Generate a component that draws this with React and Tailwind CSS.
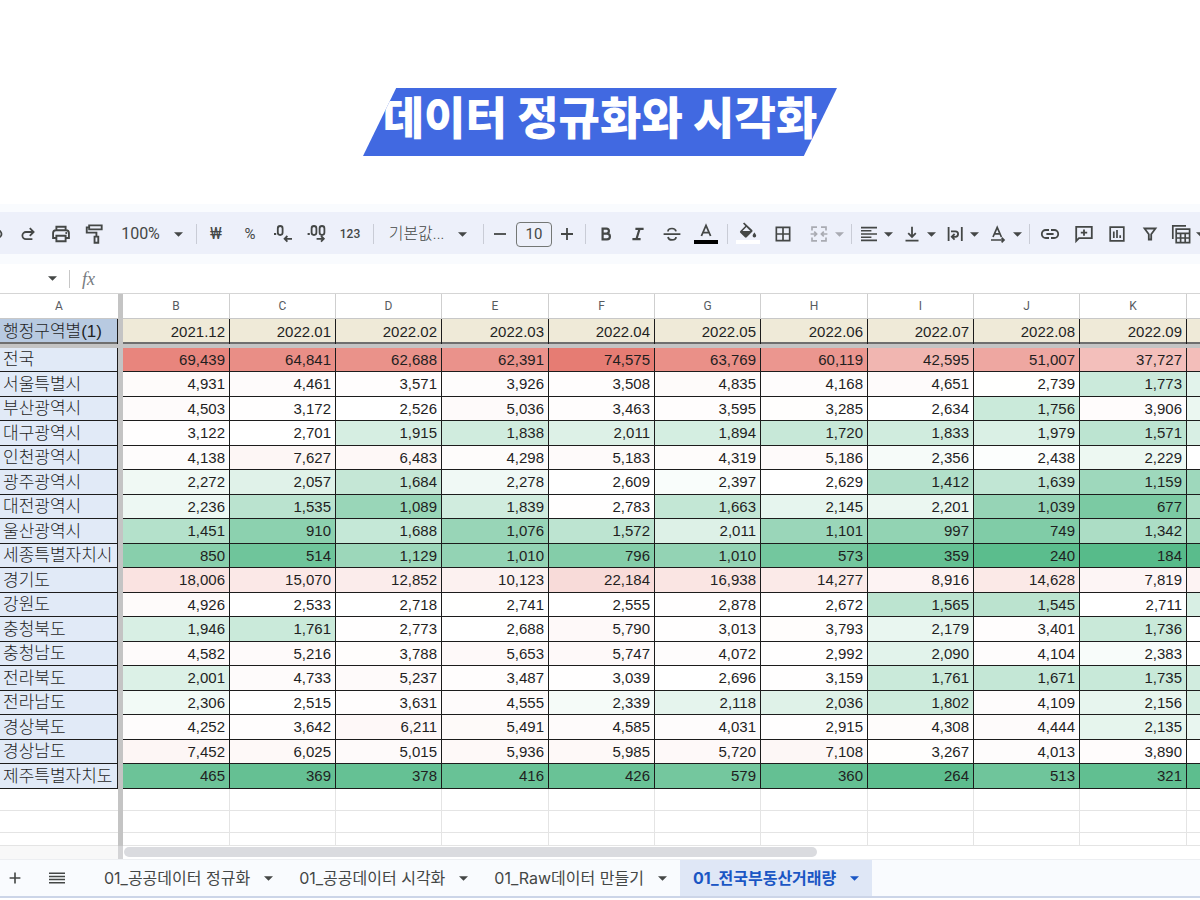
import { MdBorderAll } from "react-icons/md";

const COLS = ["B", "C", "D", "E", "F", "G", "H", "I", "J", "K"];
const MONTHS = ["2021.12", "2022.01", "2022.02", "2022.03", "2022.04", "2022.05", "2022.06", "2022.07", "2022.08", "2022.09"];

// The last value of each row only tints the trailing column.
const ROWS = [
  ["전국", 69439, 64841, 62688, 62391, 74575, 63769, 60119, 42595, 51007, 37727, 38000],
  ["서울특별시", 4931, 4461, 3571, 3926, 3508, 4835, 4168, 4651, 2739, 1773, 2080],
  ["부산광역시", 4503, 3172, 2526, 5036, 3463, 3595, 3285, 2634, 1756, 3906, 2200],
  ["대구광역시", 3122, 2701, 1915, 1838, 2011, 1894, 1720, 1833, 1979, 1571, 1950],
  ["인천광역시", 4138, 7627, 6483, 4298, 5183, 4319, 5186, 2356, 2438, 2229, 2500],
  ["광주광역시", 2272, 2057, 1684, 2278, 2609, 2397, 2629, 1412, 1639, 1159, 1160],
  ["대전광역시", 2236, 1535, 1089, 1839, 2783, 1663, 2145, 2201, 1039, 677, 1350],
  ["울산광역시", 1451, 910, 1688, 1076, 1572, 2011, 1101, 997, 749, 1342, 1250],
  ["세종특별자치시", 850, 514, 1129, 1010, 796, 1010, 573, 359, 240, 184, 220],
  ["경기도", 18006, 15070, 12852, 10123, 22184, 16938, 14277, 8916, 14628, 7819, 8900],
  ["강원도", 4926, 2533, 2718, 2741, 2555, 2878, 2672, 1565, 1545, 2711, 1950],
  ["충청북도", 1946, 1761, 2773, 2688, 5790, 3013, 3793, 2179, 3401, 1736, 2500],
  ["충청남도", 4582, 5216, 3788, 5653, 5747, 4072, 2992, 2090, 4104, 2383, 2500],
  ["전라북도", 2001, 4733, 5237, 3487, 3039, 2696, 3159, 1761, 1671, 1735, 1850],
  ["전라남도", 2306, 2515, 3631, 4555, 2339, 2118, 2036, 1802, 4109, 2156, 1900],
  ["경상북도", 4252, 3642, 6211, 5491, 4585, 4031, 2915, 4308, 4444, 2135, 2180],
  ["경상남도", 7452, 6025, 5015, 5936, 5985, 5720, 7108, 3267, 4013, 3890, 2500],
  ["제주특별자치도", 465, 369, 378, 416, 426, 579, 360, 264, 513, 321, 270],
];

const MIN = 184;
const MID = 2480;
const MAX = 74575;
const GREEN = [87, 187, 138];
const WHITE = [255, 255, 255];
const RED = [230, 124, 115];

// Three-point colour scale: green (low), white (median), red (high).
function heat(v) {
  const low = v < MID;
  const t = low ? (v - MIN) / (MID - MIN) : (v - MID) / (MAX - MID);
  const from = low ? GREEN : WHITE;
  const to = low ? WHITE : RED;
  const c = from.map((a, i) => Math.round(a + (to[i] - a) * t));
  return `rgb(${c.join(",")})`;
}

function Tool({ label, className = "", children }) {
  return (
    <button type="button" aria-label={label} className={`flex h-8 shrink-0 items-center text-[#444746] ${className}`}>
      {children}
    </button>
  );
}

function Stroke({ children, size = "size-5", width = 1.8 }) {
  return (
    <svg viewBox="0 0 20 20" className={`${size} shrink-0`} fill="none" stroke="currentColor" strokeWidth={width}>
      {children}
    </svg>
  );
}

function Caret() {
  return (
    <svg viewBox="0 0 10 5" className="h-[5px] w-[9px] shrink-0" fill="currentColor">
      <path d="M0 0h10L5 5z" />
    </svg>
  );
}

function Divider() {
  return <span className="h-5 w-px shrink-0 bg-[#c9ccd6]" />;
}

function Toolbar() {
  return (
    <div role="toolbar" aria-label="서식" className="flex h-[42px] items-center overflow-hidden bg-[#edf0fa] pt-[2px] font-[Roboto,'Noto_Sans_CJK_KR',sans-serif] text-[#444746]">
      <Tool label="실행취소" className="w-3">
        <svg viewBox="0 0 4 12" className="h-3 w-1" fill="none" stroke="currentColor" strokeWidth="1.8">
          <path d="M-2 2.5a3.5 3.5 0 0 1 0 7" />
        </svg>
      </Tool>
      <Tool label="다시실행" className="w-8 justify-center">
        <Stroke><path d="M15.4 8H8a3.6 3.6 0 0 0 0 7.200h6.400M11.800 4.200 15.600 8l-3.800 3.800" /></Stroke>
      </Tool>
      <Tool label="인쇄" className="w-[34px] justify-center">
        <Stroke size="size-[22px]" width={1.7}>
          <path d="M5.800 6.500V3.400h8.400v3.100M5.800 13.600H2.800V9.200q0-2.600 2.600-2.600h9.200q2.600 0 2.600 2.600v4.400h-3M5.800 11.600h8.400v5H5.800z" />
          <path d="M14 9.100h1.600" />
        </Stroke>
      </Tool>
      <Tool label="서식 복사" className="w-8 justify-center">
        <Stroke size="size-[22px]" width={1.7}>
          <path d="M5.600 2.200h11.400v3.600H5.600zM5.600 4H3.400v4.800h8.800v3.400" />
          <path d="M10.500 12.400h3.400v5.600h-3.400z" />
        </Stroke>
      </Tool>
      <Tool label="확대/축소" className="ml-[2px] w-20 justify-center gap-[14px] text-[16px]">
        100%
        <Caret />
      </Tool>
      <span className="w-1 shrink-0" />
      <Divider />
      <Tool label="통화 형식" className="ml-px w-[36px] justify-center text-[16px]">₩</Tool>
      <Tool label="퍼센트 형식" className="w-[32px] justify-center text-[15px]">%</Tool>
      <Tool label="소수점 이하 자릿수 감소" className="ml-px w-[32px] justify-center">
        <svg viewBox="0 0 20 20" className="size-5" fill="none" stroke="currentColor" strokeWidth="1.8">
          <rect x="4.800" y="2" width="4.800" height="9" rx="2.400" />
          <path d="M1 10h2.200M19 14.800h-7M14.400 12l-2.800 2.800 2.800 2.800" />
        </svg>
      </Tool>
      <Tool label="소수점 이하 자릿수 증가" className="w-[36px] justify-center">
        <svg viewBox="0 0 20 20" className="size-5" fill="none" stroke="currentColor" strokeWidth="1.800">
          <rect x="4.600" y="2" width="4.800" height="9" rx="2.400" />
          <rect x="12.600" y="2" width="4.800" height="9" rx="2.400" />
          <path d="M0.600 10h2.200M9.600 14.800h7M14 12l2.800 2.800-2.800 2.800" />
        </svg>
      </Tool>
      <Tool label="서식 더보기" className="w-[30px] justify-center text-[12px] font-medium">123</Tool>
      <span className="w-2 shrink-0" />
      <Divider />
      <Tool label="글꼴" className="ml-[14px] w-20 justify-center gap-[14px] text-[16px] font-light">
        <span className="whitespace-nowrap">기본값...</span>
        <Caret />
      </Tool>
      <span className="w-[15px] shrink-0" />
      <Divider />
      <Tool label="글꼴 크기 줄이기" className="w-8 justify-center">
        <Stroke><path d="M4 10h12" /></Stroke>
      </Tool>
      <input
        aria-label="글꼴 크기"
        defaultValue="10"
        className="h-[25px] w-9 shrink-0 rounded-[4px] border border-[#747775] bg-transparent text-center text-[15px] text-[#444746]"
      />
      <Tool label="글꼴 크기 늘리기" className="w-[30px] justify-center">
        <Stroke><path d="M4 10h12M10 4v12" /></Stroke>
      </Tool>
      <span className="w-[3px] shrink-0" />
      <Divider />
      <Tool label="굵게" className="ml-1 w-8 justify-center">
        <Stroke width={2.2}><path d="M6.600 4.600h3.800a2.500 2.500 0 0 1 0 5H6.600zM6.600 9.600h4.400a2.900 2.900 0 0 1 0 5.800H6.600z" /></Stroke>
      </Tool>
      <Tool label="기울임꼴" className="w-8 justify-center">
        <Stroke width={2.2}><path d="M7.400 4.800h8.200M4.400 15.200h8.200M11.600 4.800l-3.200 10.400" /></Stroke>
      </Tool>
      <Tool label="취소선" className="ml-px w-[34px] justify-center">
        <Stroke width={1.7}>
          <path d="M1.600 10.200h16.800M14 7.400c-.3-1.800-1.800-2.900-4-2.900-2.400 0-4 1.200-4 2.900M6 13c.3 1.800 1.800 2.900 4 2.900 2.400 0 4-1.200 4-2.900" />
        </Stroke>
      </Tool>
      <Tool label="텍스트 색상" className="w-[34px] justify-center">
        <svg viewBox="0 0 24 24" className="size-6" fill="none" stroke="currentColor" strokeWidth="1.800">
          <path d="M7.400 14 12 3.400l4.600 10.600M8.900 10.600h6.200" />
          <path d="M0 20h24" stroke="#000" strokeWidth="4" />
        </svg>
      </Tool>
      <span className="w-1 shrink-0" />
      <Divider />
      <Tool label="채우기 색상" className="ml-1 w-8 justify-center">
        <svg viewBox="0 0 24 24" className="size-6" fill="currentColor">
          <path d="M8.200.4 7 1.600l2.300 2.300-5 5a1.300 1.300 0 0 0 0 1.800l4.600 4.600q.9.900 1.800 0l5.500-5.500a1.300 1.300 0 0 0 0-1.800zM10.400 5l3.900 3.900H6.500z" fillRule="evenodd" />
          <path d="M18.400 10.600s-1.800 2-1.800 3.200a1.800 1.800 0 0 0 3.600 0c0-1.200-1.800-3.200-1.800-3.200z" />
          <path d="M0 18h24v4H0z" fill="#fff" />
        </svg>
      </Tool>
      <Tool label="테두리" className="ml-px w-[36px] justify-center">
        <MdBorderAll className="size-5" />
      </Tool>
      <Tool label="셀 병합" className="ml-2 w-[36px] gap-[6px] text-[#a9abb2]">
        <Stroke width={1.7}>
          <path d="M8 3.200H3v3.200M12 3.200h5v3.200M8 16.800H3v-3.200M12 16.800h5v-3.200M1.600 10h5.600M18.400 10h-5.600M5.200 7.600 7.600 10l-2.400 2.400M14.800 7.600 12.400 10l2.400 2.400" />
        </Stroke>
        <Caret />
      </Tool>
      <span className="w-[6px] shrink-0" />
      <Divider />
      <Tool label="가로 맞춤" className="ml-[9px] w-8 gap-[7px]">
        <Stroke size="size-4" width={2}><path d="M0 2h20M0 6h13M0 10h20M0 14h13M0 18h20" /></Stroke>
        <Caret />
      </Tool>
      <Tool label="세로 맞춤" className="ml-[9px] w-[34px] gap-[5px]">
        <Stroke><path d="M3.500 16.600h13M10 2.800v10M6.200 9.200 10 13l3.800-3.800" /></Stroke>
        <Caret />
      </Tool>
      <Tool label="텍스트 줄바꿈" className="ml-[9px] w-[34px] gap-[5px]">
        <Stroke><path d="M3.600 3v14M16.800 3v14M6 7.400h4.400a2.700 2.700 0 0 1 0 5.400H7.200M9.600 10l-2.800 2.800 2.800 2.800" /></Stroke>
        <Caret />
      </Tool>
      <Tool label="텍스트 회전" className="ml-[9px] w-[34px] gap-[5px]">
        <Stroke width={1.7}><path d="M5 13 9.200 3.400 13.400 13M6.400 9.800h5.600M3 16h13M13.600 13.600l2.400 2.400-2.400 2.400" /></Stroke>
        <Caret />
      </Tool>
      <span className="w-[7px] shrink-0" />
      <Divider />
      <Tool label="링크 삽입" className="ml-[3px] w-[34px] justify-center">
        <Stroke><path d="M9 6H5.800a4 4 0 0 0 0 8H9M11 6h3.200a4 4 0 0 1 0 8H11M6.400 10h7.200" /></Stroke>
      </Tool>
      <Tool label="댓글 삽입" className="w-[33px] justify-center">
        <Stroke><path d="M2.200 17V2.800h15.600v11.400H5zM10 5.400v6.400M6.800 8.600h6.400" /></Stroke>
      </Tool>
      <Tool label="차트 삽입" className="w-[34px] justify-center">
        <Stroke width={1.7}><path d="M3.200 3.200h13.600v13.600H3.200zM6.800 7.500v6.500M10 6v8M13.200 11.200V14" /></Stroke>
      </Tool>
      <Tool label="필터 만들기" className="w-8 justify-center">
        <Stroke><path d="M4.500 4.500h11l-4.300 5.700v5.300H8.800v-5.300z" /></Stroke>
      </Tool>
      <Tool label="테이블" className="w-[40px] gap-[5px] pl-[5px]">
        <Stroke width={1.7}>
          <path d="M1.800 15V1.800H15M5.200 5.200h13.400v13.400H5.200zM5.200 9.400h13.400M5.200 14h13.400M9.600 9.400v9.200M14.200 9.400v9.200" />
        </Stroke>
        <Caret />
      </Tool>
    </div>
  );
}

function FormulaBar() {
  return (
    <div className="flex h-[29px] items-center bg-white text-[#444746]">
      <button type="button" aria-label="이름 상자" className="flex h-full w-[69px] items-center justify-end pr-3">
        <Caret />
      </button>
      <span className="h-[18px] w-px bg-[#c7c7c7]" />
      <span className="ml-3 font-['Liberation_Serif',serif] text-[18px] italic leading-none text-[#777b80]">fx</span>
    </div>
  );
}

const A_EDGE = "border-r-[5px] border-r-[#c4c4c4]";

function Sheet() {
  return (
    <table className="w-full table-fixed border-separate border-spacing-0 border-t border-[#d5d5d5] font-['Liberation_Sans','Noto_Sans_CJK_KR',sans-serif] text-[15px] leading-5 text-[#1f1f1f]">
      <colgroup>
        <col className="w-[123px]" />
        {COLS.map((c, i) => (
          <col key={c} className={i % 3 === 0 ? "w-[107px]" : "w-[106px]"} />
        ))}
        <col />
      </colgroup>
      <thead>
        <tr className="h-[25px] font-[Roboto,sans-serif] text-[12px] text-[#575b5f]">
          <th scope="col" className={`border-b border-b-[#c8c8c8] p-0 font-normal ${A_EDGE}`}>A</th>
          {COLS.map((c) => (
            <th key={c} scope="col" className="border-b border-r border-b-[#c8c8c8] border-r-[#cfcfcf] p-0 font-normal">{c}</th>
          ))}
          <td className="border-b border-b-[#c8c8c8] p-0" />
        </tr>
        <tr className="h-[29px]">
          <th scope="col" className={`whitespace-nowrap border-b-4 border-b-[#c4c4c4] bg-[#b8cae1] p-0 pl-[3px] text-left text-[17px] font-light shadow-[inset_-1px_0_0_#1c1c1c,inset_0_-2px_0_#6f6f6f] ${A_EDGE}`}>
            행정구역별(1)
          </th>
          {MONTHS.map((m) => (
            <th key={m} scope="col" className="border-b-4 border-b-[#c4c4c4] bg-[#efead8] p-0 pr-[5px] text-right font-normal shadow-[inset_-1px_0_0_#1c1c1c,inset_0_-2px_0_#6f6f6f]">
              {m}
            </th>
          ))}
          <td className="border-b-4 border-b-[#c4c4c4] bg-[#efead8] p-0 shadow-[inset_0_-2px_0_#6f6f6f]" />
        </tr>
      </thead>
      <tbody>
        {ROWS.map(([name, ...vals]) => (
          <tr key={name} className="h-[24px] even:h-[25px]">
            <th scope="row" className={`whitespace-nowrap bg-[#e1eaf7] p-0 pl-[3px] text-left text-[17px] font-light shadow-[inset_-1px_-1px_0_#1c1c1c] ${A_EDGE}`}>
              {name}
            </th>
            {vals.map((v, i) => (
              <td key={i} className="border-b border-r border-[#1c1c1c] p-0 pr-1 text-right last:border-r-0" style={{ backgroundColor: heat(v) }}>
                {i < COLS.length ? v.toLocaleString("en-US") : null}
              </td>
            ))}
          </tr>
        ))}
        {["h-[22px]", "h-[22px]", "h-[13px]"].map((h, r) => (
          <tr key={r} className={h}>
            <td className={`p-0 shadow-[inset_0_-1px_0_#e4e4e4] ${A_EDGE}`} />
            {COLS.map((c) => (
              <td key={c} className="border-b border-r border-[#e4e4e4] p-0" />
            ))}
            <td className="border-b border-[#e4e4e4] p-0" />
          </tr>
        ))}
      </tbody>
    </table>
  );
}

const TABS = [
  ["01_공공데이터 정규화", false],
  ["01_공공데이터 시각화", false],
  ["01_Raw데이터 만들기", false],
  ["01_전국부동산거래량", true],
];

function SheetTabs() {
  return (
    <nav aria-label="시트" className="flex h-[39px] items-stretch border-b-2 border-t border-b-[#ccd5e8] border-t-[#eceef1] bg-[#f9fbfe] font-[Inter,'Noto_Sans_CJK_KR',sans-serif] text-[#444746]">
      <button type="button" aria-label="시트 추가" className="flex w-[30px] items-center justify-center">
        <Stroke size="size-[18px]"><path d="M4 10h12M10 4v12" /></Stroke>
      </button>
      <button type="button" aria-label="모든 시트" className="ml-[18px] flex w-[18px] items-center justify-center">
        <svg viewBox="0 0 16 12" className="h-3 w-4" fill="none" stroke="currentColor" strokeWidth="1.5">
          <path d="M0 1.200h16M0 4.400h16M0 7.600h16M0 10.800h16" />
        </svg>
      </button>
      <span className="w-[25px] shrink-0" />
      {TABS.map(([name, active]) => (
        <button
          key={name}
          type="button"
          className={`flex items-center gap-[14px] whitespace-nowrap px-[13px] text-[16px] ${active ? "bg-[#dfe7f6] font-bold text-[#1a56c4]" : "font-normal"}`}
        >
          {name}
          <Caret />
        </button>
      ))}
    </nav>
  );
}

export default function App() {
  return (
    <main className="min-h-screen overflow-hidden bg-white">
      <header className="flex justify-center pt-[88px]">
        <h1 className="flex h-[68px] w-[474px] justify-center bg-[#4169e1] font-['Noto_Sans_CJK_KR',sans-serif] text-[45px] font-black leading-[56px] text-white [clip-path:polygon(7%_0,100%_0,93%_100%,0_100%)]">
          <span className="whitespace-nowrap">데이터 정규화와 시각화</span>
        </h1>
      </header>
      <section className="mt-[48px] overflow-hidden">
        <div className="bg-[#f9fbfe] pb-[10px] pt-[8px]">
          <Toolbar />
        </div>
        <FormulaBar />
        <Sheet />
        <div className="flex h-[13px]">
          <div className="h-full w-[118px] bg-[#f8f8f8]" />
          <div className="h-full w-[5px] bg-[#d4d4d6]" />
          <div className="ml-px mt-px h-[10px] w-[693px] rounded-full bg-[#dadbdf]" />
        </div>
        <SheetTabs />
      </section>
    </main>
  );
}
